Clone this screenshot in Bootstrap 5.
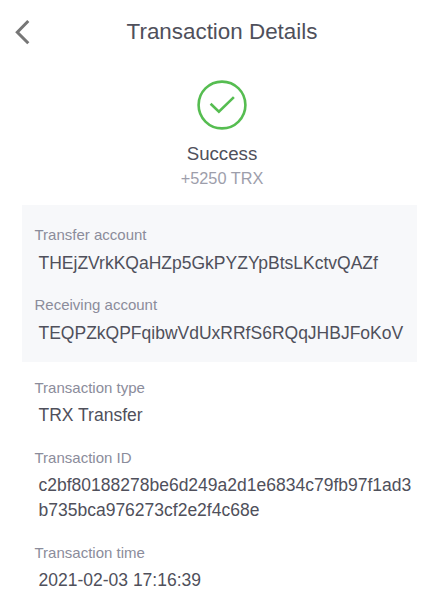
<!DOCTYPE html>
<html lang="en">
<head>
<meta charset="utf-8">
<meta name="viewport" content="width=device-width, initial-scale=1">
<title>Transaction Details</title>
<link href="https://cdn.jsdelivr.net/npm/bootstrap@5.3.0/dist/css/bootstrap.min.css" rel="stylesheet">
<style>
body{font-family:"Liberation Sans",Arial,sans-serif;color:#4f505b;background:#fff}
.top-bar{display:grid;grid-template-columns:45px 1fr 44px;height:64px}
.page-title{font-size:22.4px;line-height:28px}
.back-btn{padding:0 0 0 14px;line-height:0}
.result{padding-top:16px}
.result-state{font-size:18.7px;line-height:26px;margin-top:11px;padding-left:1px}
.result-amount{font-size:16.3px;line-height:22px;color:#9d9eab;padding-left:1px}
.details{margin:16px 26px 0 22px}
.accounts{background:#f7f8fa;padding:18px 0 16px 12.5px}
.facts{padding:14px 0 0 12.5px}
.entry+.entry{margin-top:18px}
.entry dt{font-size:15px;line-height:23px;color:#8b8c9b}
.entry dd{font-size:17.5px;line-height:25px;margin-top:4px;padding-left:4px;word-break:break-all}
.accounts .entry dd{margin-top:5px}
.accounts .entry+.entry{margin-top:17px}
</style>
</head>
<body>
<header class="top-bar align-items-center">
  <button class="btn border-0 back-btn" type="button" aria-label="Back">
    <svg class="d-block" width="18" height="26" viewBox="0 0 18 26" fill="none" stroke="#767676" stroke-width="3"><path d="M14.3 2 3.3 13.2 14.3 24.3"/></svg>
  </button>
  <h1 class="page-title fw-normal text-center mb-0">Transaction Details</h1>
</header>
<main>
  <section class="result d-flex flex-column align-items-center">
    <svg width="50" height="50" viewBox="0 0 50 50" fill="none" stroke="#56bd51" stroke-width="2.6"><circle cx="25" cy="25" r="23.4"/><path d="M13.6 23.8 21.9 31.8 36.9 17.1"/></svg>
    <div class="result-state">Success</div>
    <div class="result-amount">+5250 TRX</div>
  </section>
  <section class="details">
    <dl class="accounts mb-0">
      <div class="entry"><dt class="fw-normal">Transfer account</dt><dd class="mb-0">THEjZVrkKQaHZp5GkPYZYpBtsLKctvQAZf</dd></div>
      <div class="entry"><dt class="fw-normal">Receiving account</dt><dd class="mb-0">TEQPZkQPFqibwVdUxRRfS6RQqJHBJFoKoV</dd></div>
    </dl>
    <dl class="facts mb-0">
      <div class="entry"><dt class="fw-normal">Transaction type</dt><dd class="mb-0">TRX Transfer</dd></div>
      <div class="entry"><dt class="fw-normal">Transaction ID</dt><dd class="mb-0">c2bf80188278be6d249a2d1e6834c79fb97f1ad3b735bca976273cf2e2f4c68e</dd></div>
      <div class="entry"><dt class="fw-normal">Transaction time</dt><dd class="mb-0">2021-02-03 17:16:39</dd></div>
    </dl>
  </section>
</main>
<script src="https://cdn.jsdelivr.net/npm/bootstrap@5.3.0/dist/js/bootstrap.bundle.min.js"></script>
</body>
</html>
